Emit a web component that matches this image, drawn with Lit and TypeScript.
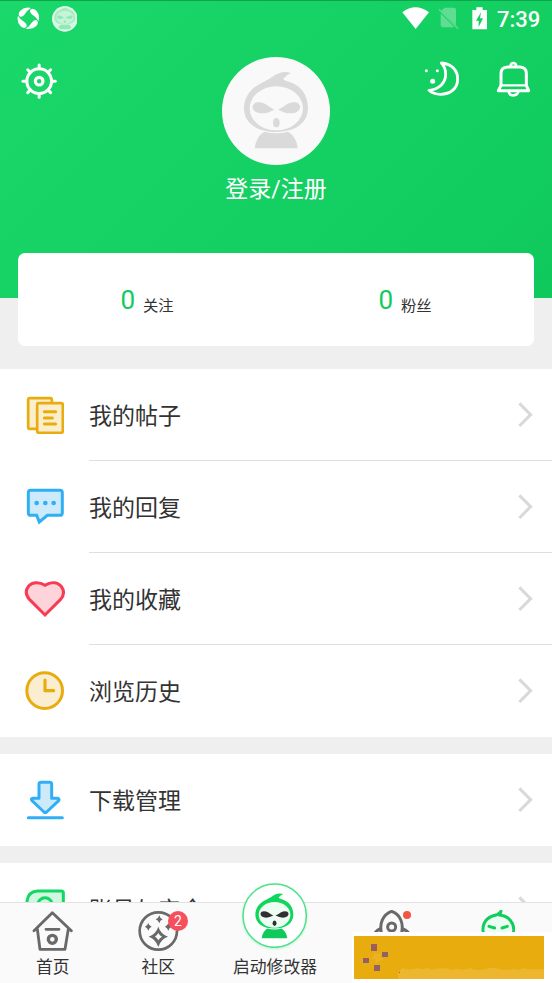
import { LitElement, html, css, svg, TemplateResult, SVGTemplateResult } from 'lit';
import { customElement, property } from 'lit/decorators.js';

/* Icons are drawn on a grid of three units per pixel. */
const icon = (box: string, body: SVGTemplateResult): TemplateResult => {
  const [, , w, h] = box.split(' ').map(Number);
  return html`<svg viewBox=${box} width=${w / 3} height=${h / 3} fill="none"
    stroke-linecap="round" stroke-linejoin="round">${body}</svg>`;
};

const hooded = (head: string, face: string, eyes: string, body: string) => svg`
  <path fill=${head} d="M132 204C132 160 163 137 192 124C216 114 224 98 254 95Q268 95 272 99Q260 103 249 116Q253 121 266 124C302 134 324 163 324 204C324 249 284 275 228 275S132 249 132 204Z"/>
  <ellipse cx="229" cy="204" rx="80" ry="66" fill=${face}/>
  <path fill=${eyes} d="M158 199C159 184 180 183 196 191Q212 202 223 208Q204 219 187 219C168 219 158 211 158 199ZM300 199C299 184 278 183 262 191Q246 202 234 208Q254 219 271 219C290 219 300 211 300 199Z"/>
  <ellipse cx="229" cy="247" rx="10" ry="14" fill=${eyes}/>
  <path fill=${body} d="M164 324Q168 289 193 274Q229 284 264 274Q290 289 293 324Z"/>`;

const ICONS: Record<string, TemplateResult> = {
  swirl: icon('50 22 68 68', svg`<g fill="#fff">
    ${[0, 90, 180, 270].map(a => svg`<path transform="rotate(${a} 84 56)" d="M60 33Q74 20 92 25Q80 32 74 43Q67 53 60 51Q50 45 60 33Z"/>`)}</g>`),
  badge: icon('155 17 77 77', svg`<circle cx="193.500" cy="55.500" r="38" fill="#d3f7e1"/>
    <g transform="translate(119 -10) scale(.326 .3)">${hooded('#a2ecbf', '#c5f4d7', '#96e7b6', '#96e7b6')}</g>
    <circle cx="193.500" cy="55.500" r="35.500" stroke="#dcf9e7" stroke-width="5"/>`),
  wifi: icon('6 21 82 68', svg`<path fill="#fff" d="M7 37Q46 7 87 37L47 87Z"/>`),
  sim: icon('114 23 62 68', svg`<path fill="#5fdd92" d="M134 25H162Q168 25 168 31V78L122 35ZM122 42L163 84H128Q122 84 122 78Z"/>
    <path stroke="#5fdd92" stroke-width="4" d="M118 31L173 87"/>`),
  battery: icon('216 20 46 68', svg`<path fill="#fff" d="M217 29H229V21H248V29H261V87H217Z"/>
    <path fill="#13ce61" d="M243 36L228 61H236V80L249 54H240Z"/>`),
  gear: icon('63 187 109 109', svg`<g stroke="#fff"><circle cx="117.500" cy="241.500" r="37" stroke-width="9"/>
    <circle cx="117.500" cy="241.500" r="11.500" stroke-width="9.500"/>
    ${[0, 45, 90, 135, 180, 225, 270, 315].map(a => svg`<path stroke-width="9" transform="rotate(${a} 117.500 241.500)" d="M117.500 193V204"/>`)}</g>`),
  moon: icon('72 181 108 108', svg`<path stroke="#fff" stroke-width="8.500" d="M124 187C157 189 173 211 173 235C173 263 152 281 121 281Q100 281 87 269C117 266 137 247 137 221Q137 200 124 187Z"/>
    <g fill="#fff"><circle cx="79" cy="210" r="4.500"/><circle cx="112" cy="210" r="4.500"/><circle cx="98" cy="242" r="7.500"/></g>`),
  bell: icon('289 180 105 110', svg`<g stroke="#fff" stroke-width="9"><path d="M304 253V217Q304 199 324 198H361Q380 199 380 217V253L387 269H296Z"/>
    <path stroke-width="7" d="M304 253H380"/><path stroke-width="8" d="M333 196Q333 186 341 186T350 196M327 272Q329 283 341 283T356 272"/></g>`),
  avatar: icon('66 50 324 324', svg`<circle cx="228" cy="212" r="162" fill="#f9f9f9"/>${hooded('#dadada', '#f9f9f9', '#dadada', '#dadada')}`),
  posts: icon('78 45 116 116', svg`<g fill="#fbeecd" stroke="#e8ac0e" stroke-width="8"><rect x="84.500" y="51.500" width="71" height="92" rx="5"/>
    <rect x="111.500" y="66.500" width="77" height="89" rx="5"/><path fill="none" stroke-width="9" d="M133 92H167M133 111H157M133 129H167"/></g>`),
  reply: icon('78 324 116 112', svg`<path fill="#cdeafb" stroke="#31aff5" stroke-width="9" stroke-linejoin="miter" d="M92 331H180Q187 331 187 338V398Q187 406 180 406H142L118 426L110 406H92Q85 406 85 398V338Q85 331 92 331Z"/>
    <g fill="#31aff5"><circle cx="110" cy="369" r="7"/><circle cx="136" cy="369" r="7"/><circle cx="161" cy="369" r="7"/></g>`),
  heart: icon('73 60 126 114', svg`<path fill="#ffd3da" stroke="#f83b55" stroke-width="9" stroke-linejoin="miter" d="M136 76C118 64 98 66 87 78C77 91 78 106 90 119L136 165L182 119C194 106 194 91 184 78C172 66 154 64 136 76Z"/>`),
  clock: icon('77 334 118 118', svg`<circle cx="136" cy="393" r="53.500" fill="#fbeed0" stroke="#e8ac0e" stroke-width="9"/>
    <path stroke="#e8ac0e" stroke-width="9.500" d="M137 361V393H163"/>`),
  download: icon('78 60 116 120', svg`<path fill="#cdeafb" stroke="#31aff5" stroke-width="9" d="M123 67H149Q155 67 155 73V115H174Q179 117 176 122L140 156Q136 159 132 156L96 122Q92 117 97 115H117V73Q117 67 123 67Z"/>
    <path stroke="#31aff5" stroke-width="9" d="M85 173.500H187"/>`),
  account: icon('76 383 120 120', svg`<path fill="#d0f7df" stroke="#12d765" stroke-width="9" d="M113 389H185Q191 389 191 395V490H82V420Q85 391 113 389Z"/>
    <circle cx="136" cy="430" r="21" stroke="#12d765" stroke-width="9"/>`),
  chevron: icon('0 0 46 76', svg`<path stroke="#d9d9d9" stroke-width="9" stroke-linecap="butt" stroke-linejoin="miter" d="M4 4L38 38L4 72"/>`),
  home: icon('97 90 124 126', svg`<g stroke="#696969" stroke-width="8.500"><path d="M103 152L158 98L215 152M113 147L121 208H196L206 147M139 148H178"/>
    <circle cx="158" cy="178" r="12" stroke-width="10"/></g>`),
  community: icon('415 90 122 126', svg`<circle cx="476" cy="153" r="56" stroke="#696969" stroke-width="8"/>
    <path fill="#696969" fill-rule="evenodd" d="M476 140Q483 162 505 170Q483 177 476 201Q468 177 447 170Q469 162 476 140ZM476 159Q472 166 466 170Q473 174 476 181Q480 174 487 170Q479 166 476 159Z"/>
    <path fill="#696969" d="M479 106Q481 116 489 118Q481 121 479 130Q476 121 468 118Q476 116 479 106ZM446 129Q448 138 456 140Q448 143 446 152Q443 143 436 140Q443 138 446 129ZM506 129Q508 138 516 140Q508 143 506 152Q503 143 496 140Q503 138 506 129Z"/>`),
  launch: icon('128 40 196 196', svg`<circle cx="226" cy="138" r="95" fill="#fff" stroke="#4fe189" stroke-width="4.500"/>
    <g transform="translate(89.6 16) scale(.594 .585)">${hooded('#10d75b', '#edfdf4', '#303030', '#10c95b')}</g>`),
  rocket: icon('82 90 116 126', svg`<g stroke="#696969" stroke-width="9"><path d="M112 166C101 130 116 103 141 94C166 103 180 130 169 166ZM106 147Q92 153 88 166M175 147Q190 153 195 166"/>
    <circle cx="141" cy="141" r="12"/></g>`),
  mine: icon('408 88 104 126', svg`<path fill="#eafff2" stroke="#10cd5d" stroke-width="9" d="M414 150C412 119 435 105 456 102Q464 99 468 92Q466 99 463 103C491 105 508 127 506 150Q501 189 460 189T414 150Z"/>
    <path stroke="#10cd5d" stroke-width="9" d="M432 137L449 142M471 142L487 137"/>`),
};

@customElement('menu-row')
class MenuRow extends LitElement {
  @property() icon = '';
  @property() label = '';

  static styles = css`
    :host { display: flex; height: 92px; box-sizing: border-box; background: #fff; }
    svg { display: block; }
    .icon { width: 89px; padding: 0 0 0 1px; box-sizing: border-box; display: grid; place-items: center; }
    .main { flex: 1; display: flex; align-items: center; justify-content: space-between;
      box-sizing: border-box; padding-right: 18.500px; border-bottom: 1px solid var(--line, #dfdfdf); }
    .label { font-size: 23px; line-height: 34px; color: #333; padding-top: 4px; }
  `;

  render() {
    return html`<div class="icon">${ICONS[this.icon]}</div>
      <div class="main"><span class="label">${this.label}</span>${ICONS.chevron}</div>`;
  }
}

@customElement('app-root')
class AppRoot extends LitElement {
  static styles = css`
    :host { display: flex; flex-direction: column; position: relative; height: 983px; width: 552px; overflow: hidden;
      background: #efefef; color: #333; font-family: Roboto, 'Noto Sans CJK SC', sans-serif; }
    * { box-sizing: border-box; }
    svg { display: block; flex: none; }
    .content { flex: 1; min-height: 0; overflow: hidden; }
    .header { height: 298px; background: linear-gradient(135deg, #1bd86b, #0fc95c); box-shadow: inset 0 1px 0 #0fa34c; }
    .status { height: 57px; display: flex; align-items: flex-start; padding: 6px 12px 0 17px; }
    .status .apps { display: flex; gap: 12px; flex: 1; }
    .status .signals { display: flex; gap: 9px; align-items: flex-start; }
    .signals svg { margin-top: 1px; }
    .signals .battery { margin-left: 4px; }
    .time { font-size: 22px; line-height: 28px; font-weight: 500; color: #fff; width: 44px; padding-left: 1px; white-space: nowrap; }
    .apps svg:first-child { margin-top: 1px; }
    .profile { display: grid; grid-template-columns: 1fr 108px 1fr; align-items: start; padding: 0 21px 0 21px; }
    .gear { padding-top: 5.500px; }
    .person { display: flex; flex-direction: column; align-items: center; }
    .name { font-size: 23px; line-height: 34px; color: #fff; margin-top: 8px; white-space: nowrap; }
    .actions { display: flex; justify-content: flex-end; gap: 36px; padding-top: 3.500px; }
    .stats { position: relative; display: grid; grid-template-columns: 1fr 1fr; height: 93px; margin: -45px 18px 23px;
      border-radius: 7px; background: #fff; }
    .stat { display: flex; align-items: baseline; justify-content: center; padding-top: 31px; gap: 8px; }
    .count { font-size: 26px; line-height: 32px; color: #10cb5e; }
    .what { font-size: 15.300px; line-height: 24px; position: relative; top: 2px; }
    .group { margin-bottom: 17px; background: #fff; }
    .first { height: 368px; }
    .plain { --line: transparent; }
    .tabs { position: relative; height: 81px; display: grid; grid-template-columns: 105.500px 105.500px 128px 105px 108px;
      background: #fafafa; border-top: 1px solid #e3e3e3; }
    .tab { display: flex; flex-direction: column; align-items: center; padding-top: 7px; font-size: 16.800px; line-height: 24px; }
    .tab .label { margin-top: 3px; white-space: nowrap; }
    .launch { padding-top: 0; margin-top: -20px; }
    .launch svg { filter: drop-shadow(0 1px 1px #bff3d3); }
    .launch .label { margin-top: 7px; }
    .glyph { position: relative; }
    .count-badge { position: absolute; left: 30px; top: 1px; width: 20px; height: 20px; border-radius: 50%; background: #f84f5c;
      color: #fff; font-size: 14px; line-height: 21px; text-align: center; }
    .dot { position: absolute; left: 31px; top: 1px; width: 8px; height: 8px; border-radius: 50%; background: #f45540; }
    .overlay { position: absolute; right: 0; bottom: 0; width: 200px; height: 51px; padding: 4px 8px 4px 2px; background: #fff; }
  `;

  private rows = [
    ['posts', '我的帖子'],
    ['reply', '我的回复'],
    ['heart', '我的收藏'],
    ['clock', '浏览历史'],
  ];

  render() {
    return html`
      <div class="content">
        <div class="header">
          <div class="status">
            <div class="apps">${ICONS.swirl}${ICONS.badge}</div>
            <div class="signals">${ICONS.wifi}${ICONS.sim}<span class="battery">${ICONS.battery}</span><span class="time">7:39</span></div>
          </div>
          <div class="profile">
            <div class="gear">${ICONS.gear}</div>
            <div class="person">${ICONS.avatar}<div class="name">登录/注册</div></div>
            <div class="actions">${ICONS.moon}${ICONS.bell}</div>
          </div>
        </div>
        <div class="stats">
          ${['关注', '粉丝'].map(t => html`<div class="stat"><span class="count">0</span><span class="what">${t}</span></div>`)}
        </div>
        <div class="group first">
          ${this.rows.map(([i, l], n) => html`<menu-row class=${n === 3 ? 'plain' : ''} .icon=${i} .label=${l}></menu-row>`)}
        </div>
        <div class="group"><menu-row class="plain" .icon=${'download'} .label=${'下载管理'}></menu-row></div>
        <div class="group"><menu-row class="plain" .icon=${'account'} .label=${'账号与安全'}></menu-row></div>
      </div>
      <div class="tabs">
        <div class="tab">${ICONS.home}<span class="label">首页</span></div>
        <div class="tab"><div class="glyph">${ICONS.community}<span class="count-badge">2</span></div><span class="label">社区</span></div>
        <div class="tab launch">${ICONS.launch}<span class="label">启动修改器</span></div>
        <div class="tab"><div class="glyph">${ICONS.rocket}<span class="dot"></span></div></div>
        <div class="tab">${ICONS.mine}</div>
      </div>
      <div class="overlay">
        <svg width="190" height="43" viewBox="0 0 570 129">
          <path fill="#e8ac0e" d="M0 0H570V129H0Z"/>
          <path fill="#ecb72e" d="M132 129V112L138 105L144 96L158 100H176L190 96L202 100L222 96L234 101L255 97H276L290 102L310 98L330 101L348 96L362 101H387L400 97L423 95L444 101H465L478 98L492 101L510 96L526 100H570V129Z"/>
          <path fill="#ebb226" d="M61 49L72 54L84 49L78 62L90 72L73 75L65 83L64 68L48 70L60 60Z"/>
          <g fill="#8d6268"><path d="M51 24H69V45H51ZM84 48H102V63H84ZM27 66H45V81H27ZM60 87H78V105H60Z"/></g>
          <g fill="#bc5145"><path d="M60 27H66V42H60ZM30 66H42V69H30ZM60 90H63V102H60ZM135 108H138V111H135Z"/></g>
        </svg>
      </div>`;
  }
}
